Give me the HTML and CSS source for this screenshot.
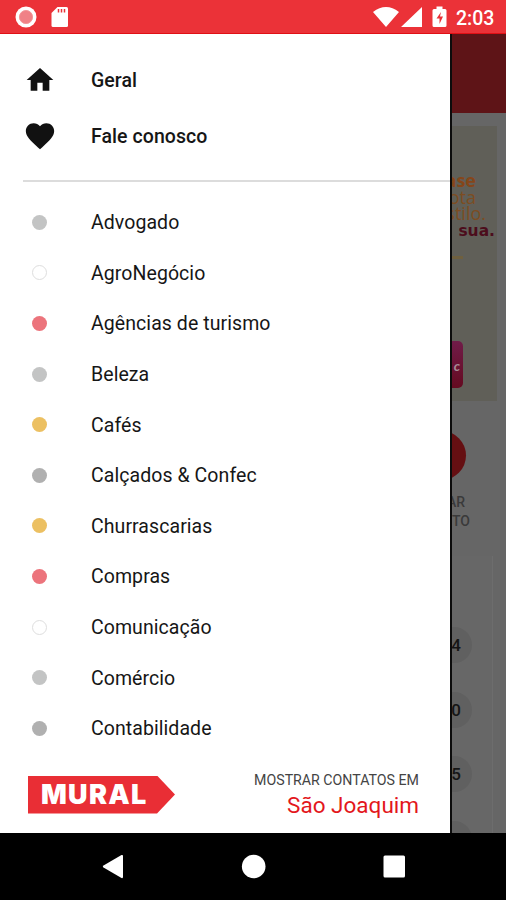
FILE: index.html
```html
<!DOCTYPE html>
<html lang="pt-BR">
<head>
<meta charset="utf-8">
<title>Mural</title>
<link rel="stylesheet" href="styles.css">
</head>
<body>
<header class="status">
  <svg class="status-left" width="60" height="24" viewBox="0 0 60 24">
    <circle cx="11" cy="12" r="10.5" fill="#fff"/><circle cx="11" cy="12" r="6.6" fill="#f08186" stroke="#f4999c"/>
    <path d="M42.500 2H51.500q1.500 0 1.500 1.500V20.500q0 1.500-1.500 1.500H38q-1.500 0-1.500-1.500V8z" fill="#fff"/>
    <path d="M43.500 4v3.500M46.500 4v3.500M49.500 4v3.500" stroke="#e93238" stroke-width="1.500"/>
  </svg>
  <svg class="status-right" width="76" height="24" viewBox="0 0 76 24">
    <path d="M0 7Q13-3 26 7L13 22zM28 22L49 2V22z" fill="#fff"/>
    <path d="M61 4h2.500V1.500h6V4H72q1.500 0 1.500 1.500V20.500q0 1.500-1.500 1.500H61q-1.500 0-1.500-1.500V5.500q0-1.500 1.500-1.500z" fill="#fff"/>
    <path d="M68 7L63.500 13.500h3v5.500L70 11.500h-3z" fill="#e93238"/>
  </svg>
  <span class="time">2:03</span>
</header>
<main class="screen">
  <nav class="drawer">
    <a class="item main"><svg width="32" height="32" viewBox="0 0 24 24"><path d="M10 20v-6h4v6h5v-8h3L12 3 2 12h3v8z"/></svg><span>Geral</span></a>
    <a class="item main"><svg width="34" height="34" viewBox="0 0 24 24"><path d="M12 21.350l-1.450-1.320C5.400 15.360 2 12.280 2 8.500 2 5.420 4.420 3 7.500 3c1.740 0 3.410.810 4.500 2.090C13.090 3.810 14.760 3 16.500 3 19.580 3 22 5.420 22 8.500c0 3.780-3.400 6.860-8.550 11.540z"/></svg><span>Fale conosco</span></a>
    <hr>
    <div class="categories">
      <a class="item"><i class="dot silver"></i><span>Advogado</span></a>
      <a class="item"><i class="dot white"></i><span>AgroNegócio</span></a>
      <a class="item"><i class="dot red"></i><span>Agências de turismo</span></a>
      <a class="item"><i class="dot silver"></i><span>Beleza</span></a>
      <a class="item"><i class="dot gold"></i><span>Cafés</span></a>
      <a class="item"><i class="dot gray"></i><span>Calçados &amp; Confec</span></a>
      <a class="item"><i class="dot gold"></i><span>Churrascarias</span></a>
      <a class="item"><i class="dot red"></i><span>Compras</span></a>
      <a class="item"><i class="dot white"></i><span>Comunicação</span></a>
      <a class="item"><i class="dot silver"></i><span>Comércio</span></a>
      <a class="item"><i class="dot gray"></i><span>Contabilidade</span></a>
    </div>
    <footer class="foot">
      <div class="logo"><span>MURAL</span></div>
      <div class="city"><small>MOSTRAR CONTATOS EM</small><strong>São Joaquim</strong></div>
    </footer>
  </nav>
  <section class="behind">
    <div class="appbar"></div>
    <div class="banner">
      <span class="ase">ase</span>
      <span class="ota">ota</span>
      <span class="stilo">stilo.</span>
      <span class="sua">sua.</span>
      <span class="rule"></span>
      <span class="clic">c</span>
    </div>
    <div class="round"></div>
    <div class="label">AR</div>
    <div class="label to">TO</div>
    <div class="panel">
      <span class="count">4</span><span class="count">0</span><span class="count">5</span><span class="count"></span>
    </div>
  </section>
</main>
<footer class="navbar">
  <svg width="506" height="67" viewBox="0 0 506 67" fill="#fff">
    <path d="M103.500 32.500L121.500 22q1.500-.500 1.500 1v21q0 1.500-1.500 1L103.500 34.500q-1.500-1 0-2z"/>
    <circle cx="253.700" cy="33.500" r="11.800"/>
    <rect x="383.500" y="22.500" width="21.500" height="22" rx="1.500"/>
  </svg>
</footer>
</body>
</html>
```
FILE: styles.css
```css
* { box-sizing: border-box; }
body {
  margin: 0;
  width: 506px;
  height: 900px;
  display: flex;
  flex-direction: column;
  overflow: hidden;
  font-family: Roboto, "Liberation Sans", sans-serif;
  color: #161616;
}
.status {
  height: 34px;
  flex: none;
  display: flex;
  align-items: center;
  padding: 1px 9px 0 15px;
  background: #eb3238;
  border-bottom: 1px solid #e01015;
}
.status-right { margin-left: auto; }
.time { width: 48px; padding: 2px 0 0 7px; color: #fff; font-size: 19.500px; font-weight: 500; white-space: nowrap; }
.screen { height: 799px; flex: none; display: flex; overflow: hidden; }
.drawer {
  width: 452px;
  flex: none;
  background: #fff;
  border-right: 2px solid #0c0c0c;
  padding-top: 18px;
}
.item {
  height: 50.600px;
  display: grid;
  grid-template-columns: 79px 1fr;
  padding-left: 12px;
  align-items: center;
  font-size: 19.500px;
  letter-spacing: .07px;
}
.item span { padding-top: 1px; }
.item svg, .dot { justify-self: center; margin-right: 24px; fill: #111; }
.main { height: 56px; font-weight: 500; }
hr { margin: 16px 0 0 23px; border: 0; height: 2px; background: #dcdcdc; }
.categories { padding-top: 15px; }
.dot { width: 15px; height: 15px; border-radius: 50%; }
.silver { background: #c3c4c4; }
.gray { background: #b0b0b0; }
.red { background: #ec747c; }
.gold { background: #ecc062; }
.white { background: #fff; border: 1px solid #dedede; }
.foot { display: flex; justify-content: space-between; padding: 17px 31px 0 28px; }
.logo {
  width: 147px;
  height: 38px;
  margin-top: 5px;
  background: #e92e35;
  clip-path: polygon(0 0, 129px 0, 100% 50%, 129px 100%, 0 100%);
  color: #fff;
  font: 900 27px/38px Inter, sans-serif;
  letter-spacing: 1.300px;
  padding-left: 13px;
}
.city { display: flex; flex-direction: column; align-items: flex-end; white-space: nowrap; }
.city small { font-size: 14.200px; line-height: 18px; color: #444; }
.city strong { font-size: 22.500px; line-height: 33px; font-weight: 400; color: #e3171c; }
.behind {
  width: 54px;
  flex: none;
  display: flex;
  flex-direction: column;
  align-items: flex-end;
  background: #666;
  overflow: hidden;
}
.appbar { width: 100%; height: 79px; flex: none; background: #5e1417; }
.banner {
  width: 45px;
  height: 275px;
  flex: none;
  margin: 13px 9px 0 0;
  background: #605f58;
  overflow: hidden;
  display: flex;
  flex-direction: column;
  align-items: flex-end;
  font-family: "Open Sans", sans-serif;
  padding-top: 45px;
}
.banner span { flex: none; }
.ase { font-size: 18px; line-height: 19px; font-weight: 700; color: #85461a; margin-right: 21px; }
.ota { font-size: 18px; line-height: 15px; color: #7d4d22; margin-right: 21px; }
.stilo { font-size: 18px; line-height: 16px; color: #7d4d22; margin-right: 11px; }
.sua { font: 700 15.500px/20px "DejaVu Sans", sans-serif; color: #4c0d1c; margin-right: 2px; }
.rule { width: 11px; height: 3px; margin: 15px 34px 0 0; background: #6f603f; }
.clic {
  width: 40px;
  height: 47px;
  margin: 82px 34px 0 0;
  padding-right: 3px;
  border-radius: 0 5px 5px 0;
  background: linear-gradient(#701c49, #650a20);
  color: #a58b96;
  font: italic 700 14px/50px Lato, sans-serif;
  text-align: right;
}
.round { width: 49px; height: 49px; flex: none; margin: 30px 40px 0 0; border-radius: 50%; background: #650f12; }
.label { font-size: 14px; line-height: 19px; font-weight: 500; color: #3a3a3a; margin: 13px 41px 0 0; }
.to { margin: 0 36px 0 0; }
.panel {
  width: 41px;
  height: 280px;
  flex: none;
  margin: 25px 13px 0 0;
  padding: 71px 20px 0 0;
  border-right: 1px solid #6d6d6d;
  background: #676767;
  display: flex;
  flex-direction: column;
  align-items: flex-end;
  gap: 28.500px;
}
.count {
  width: 36px;
  height: 36px;
  flex: none;
  border-radius: 50%;
  background: #606060;
  color: #151515;
  font-size: 17px;
  font-weight: 500;
  line-height: 37px;
  text-align: center;
  padding-left: 4px;
}
.navbar { height: 67px; flex: none; background: #000; }
.navbar svg { display: block; }
```
